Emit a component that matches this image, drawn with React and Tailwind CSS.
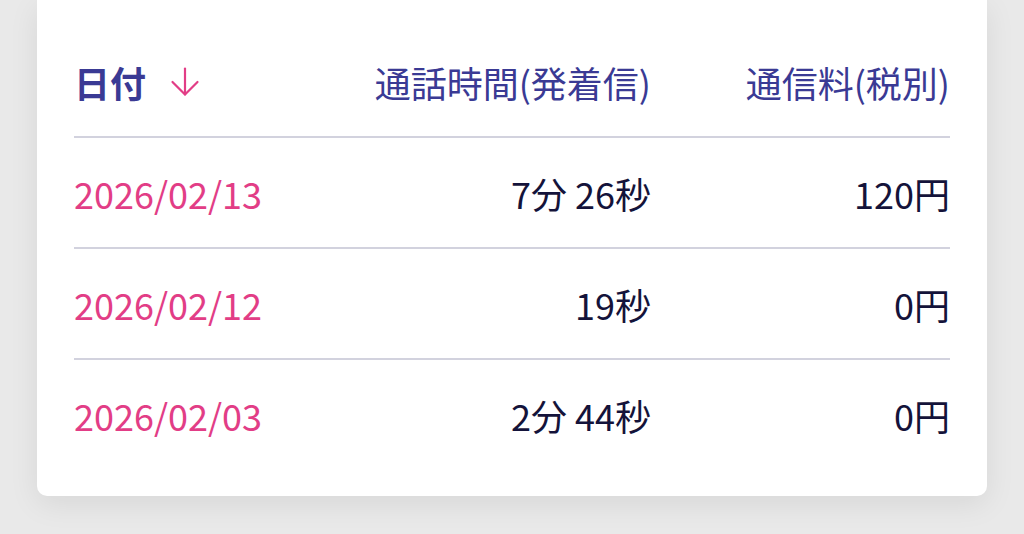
import React from "react";

const rows = [
  { date: "2026/02/13", time: "7分 26秒", fee: "120円" },
  { date: "2026/02/12", time: "19秒", fee: "0円" },
  { date: "2026/02/03", time: "2分 44秒", fee: "0円" },
];

export default function App() {
  return (
    <div
      className="h-[534px] w-[1024px] overflow-hidden bg-[#e9e9e9] px-[37px]"
      style={{ fontFamily: '"Noto Sans CJK JP", "Noto Sans", sans-serif' }}
    >
      <div className="rounded-b-[10px] bg-white px-[37px] pb-[27px] shadow-[0_8px_30px_rgba(0,0,0,0.08)]">
        <div className="flex h-[136px] items-center pt-[28px] text-[36px] leading-none text-[#3a3a94]">
          <div className="flex flex-1 items-center">
            <span className="font-bold">日付</span>
            <svg
              className="ml-[24px]"
              width="30"
              height="30"
              viewBox="0 0 30 30"
              fill="none"
              stroke="#e23d86"
              strokeWidth="2.2"
              strokeLinecap="round"
              strokeLinejoin="round"
            >
              <path d="M15 1.5 V27.5" />
              <path d="M2.5 15 L15 27.5 L27.5 15" />
            </svg>
          </div>
          <div className="w-[300px] text-right">通話時間(発着信)</div>
          <div className="w-[299px] text-right">通信料(税別)</div>
        </div>
        {rows.map((r, i) => (
          <div
            key={i}
            className="flex h-[111px] items-center border-t-2 border-[#d2d2de] text-[36px] leading-none"
          >
            <div className="flex-1 text-[#e23d86]">{r.date}</div>
            <div className="w-[300px] text-right text-[#14133a]">{r.time}</div>
            <div className="w-[299px] text-right text-[#14133a]">{r.fee}</div>
          </div>
        ))}
      </div>
    </div>
  );
}
